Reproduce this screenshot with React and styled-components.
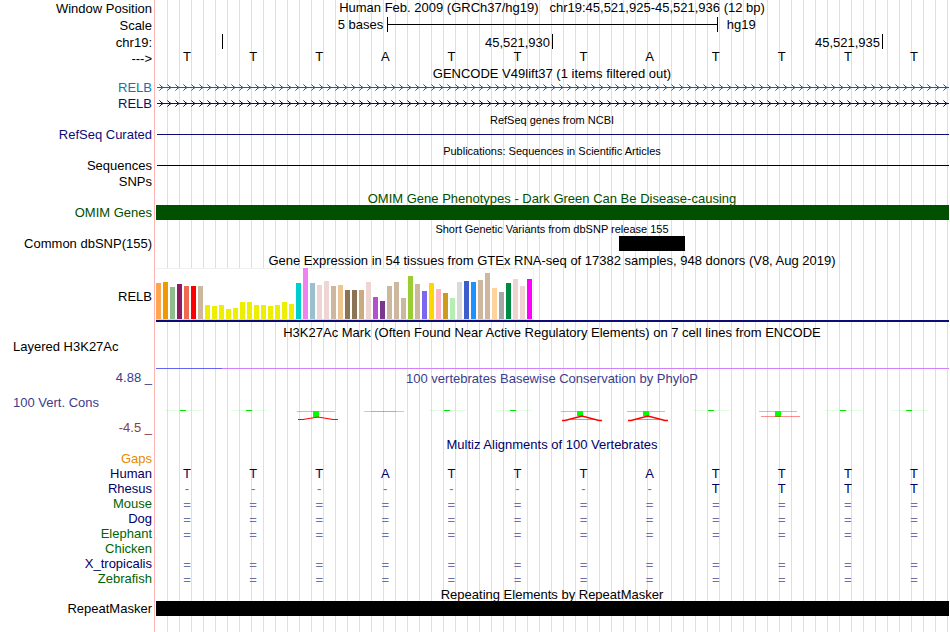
import React from 'react'
import styled, { createGlobalStyle } from 'styled-components'

const GlobalStyle = createGlobalStyle`
  body {
    margin: 0;
    background: #fff;
  }
`

const Browser = styled.main`
  min-height: 100vh;
  box-sizing: border-box;
  padding-right: 1px;
  font-family: 'Liberation Sans', Arial, sans-serif;
  font-size: 13px;
  line-height: 15px;
  color: #000;
  background-color: #fff;
  background-image:
    linear-gradient(to right, transparent 154px, #ffb4b4 154px, #ffb4b4 155px, transparent 155px),
    repeating-linear-gradient(to right, transparent 0, transparent 11px, #dcdcfa 11px, #dcdcfa 12px);
  background-position: 0 0, 156px 0;
  background-repeat: no-repeat;
`

const Row = styled.div`
  display: grid;
  grid-template-columns: 152px minmax(0, 1fr);
  column-gap: 4px;
  height: ${p => p.$height || 15}px;
  line-height: ${p => p.$line || 15}px;
`

const Label = styled.div`
  display: flex;
  flex-direction: column;
  gap: 10px;
  text-align: right;
  white-space: pre;
  color: ${p => p.$color || '#000'};
  padding-top: ${p => p.$top || 0}px;
`

const WideLabel = styled.div`
  text-align: left;
  padding-left: 13px;
`

const LowerLimit = styled.div`
  color: #8c3c3c;
`

const Title = styled.div`
  box-sizing: border-box;
  height: 15px;
  padding: 1px 1px 0 0;
  text-align: center;
  white-space: pre;
  color: ${p => p.$color || '#000'};
  font-size: ${p => (p.$small ? 11 : 13)}px;
  line-height: ${p => (p.$small ? 14 : 15)}px;
`

const Position = styled.div`
  padding-right: 1px;
  text-align: center;
  white-space: pre;
  line-height: 15px;
`

const Scale = styled.div`
  display: grid;
  grid-template-columns: 7fr 10fr 7fr;
`

const ScaleText = styled.div`
  padding: 0 4px 0 9px;
  text-align: ${p => p.$align};
  line-height: 16px;
`

const ScaleBar = styled.div`
  height: 15px;
  border: solid #000;
  border-width: 0 1px;
  background: linear-gradient(#000, #000) 0 7px / 100% 1px no-repeat;
`

const Ruler = styled.div`
  display: grid;
  grid-template-columns: 1fr 5fr 5fr 1fr;
  margin-right: 1px;
`

const Tick = styled.div`
  height: 15px;
  padding-right: 2px;
  text-align: right;
  border-left: ${p => (p.$first ? 'none' : '1px solid #000')};
`

const Bases = styled.div`
  display: grid;
  grid-template-columns: repeat(12, minmax(0, 1fr));
  margin: 0 2px 0 -2px;
  text-align: center;
  line-height: ${p => p.$line || 15}px;
  color: ${p => p.$color || '#000'};
`

const Base = styled.span`
  line-height: ${p => (p.$mark === '=' ? '17px' : 'inherit')};
  color: ${p => (p.$mark === '=' || p.$mark === '-' ? '#6e6eaa' : 'inherit')};
`

const Strand = styled.svg`
  display: block;
  width: 100%;
  height: 15px;
`

const Line = styled.div`
  height: 1px;
  margin: 7px 0 0 1px;
  background: ${p => p.$color};
`

const Block = styled.div`
  height: 15px;
  background: ${p => p.$color};
`

const Variant = styled.div`
  display: grid;
  grid-template-columns: 7fr 1fr 4fr;
`

const VariantBlock = styled(Block)`
  grid-column: 2;
`

const Expression = styled.div`
  padding-top: 1px;
`

const Bars = styled.div`
  box-sizing: border-box;
  display: flex;
  align-items: flex-end;
  gap: 2px;
  width: 378px;
  height: 52px;
  border: solid #f0f0f0;
  border-width: 1px 1px 1px 0;
  border-bottom-color: #d8d8d8;
  background: #fff;
`

const Bar = styled.div`
  flex: none;
  width: 5px;
`

const GeneLine = styled.div`
  height: 2px;
  background: #0c0c78;
`

const Histone = styled.div`
  display: grid;
  grid-template-columns: 1fr 11fr;
  padding-top: 29px;
`

const Signal = styled.div`
  height: 1px;
  background: ${p => p.$color};
`

const Scores = styled(Bases)`
  justify-items: center;
  margin: 0 4px 0 -3px;
  padding-top: 25px;
`

const tissues = [
  [36, '#ffa54f'], [37, '#ee9a00'], [32, '#8fbc8f'], [35, '#8b1c62'], [33, '#ee6a50'],
  [33, '#ff0000'], [33, '#cdb79e'], [14, '#eeee00'], [13, '#eeee00'], [14, '#eeee00'],
  [10, '#eeee00'], [11, '#eeee00'], [17, '#eeee00'], [17, '#eeee00'], [14, '#eeee00'],
  [14, '#eeee00'], [13, '#eeee00'], [14, '#eeee00'], [17, '#eeee00'], [15, '#eeee00'],
  [36, '#00cdcd'], [51, '#ee82ee'], [36, '#9ac0cd'], [34, '#eed5d2'], [38, '#eed5d2'],
  [33, '#cdb79e'], [34, '#eec591'], [29, '#8b7355'], [29, '#8b7355'], [29, '#cdaa7d'],
  [37, '#eed5d2'], [22, '#b452cd'], [18, '#7a378b'], [33, '#cdb79e'], [37, '#cdb79e'],
  [21, '#cdb79e'], [43, '#9acd32'], [35, '#cdb79e'], [28, '#7a67ee'], [36, '#ffd700'],
  [30, '#ffb6c1'], [26, '#cd9b1d'], [21, '#b4eeb4'], [37, '#d9d9d9'], [38, '#3a5fcd'],
  [37, '#1e90ff'], [39, '#cdb79e'], [46, '#cdb79e'], [31, '#ffd39b'], [27, '#a6a6a6'],
  [36, '#008b45'], [40, '#eed5d2'], [33, '#eed5d2'], [40, '#ff00ff']
]

const navy = '#000064'
const green = '#006400'

const alignments = [
  ['Gaps', '#e68a00', ''],
  ['Human', navy, 'TTTATTTATTTT'],
  ['Rhesus', navy, '--------TTTT'],
  ['Mouse', green, '============'],
  ['Dog', navy, '============'],
  ['Elephant', green, '============'],
  ['Chicken', green, ''],
  ['X_tropicalis', navy, '============'],
  ['Zebrafish', green, '============']
]

const scores = ['up', 'up', 'low', 'flat', 'up', 'up', 'down', 'down', 'up', 'mixed', 'up', 'up']

const Sequence = ({ bases, color, line }) => (
  <Bases $color={color} $line={line}>
    {bases.split('').map((base, i) => <Base key={i} $mark={base}>{base}</Base>)}
  </Bases>
)

const Intron = ({ id, color }) => (
  <Strand shapeRendering='crispEdges' aria-hidden='true'>
    <defs>
      <pattern id={id} width='8' height='15' patternUnits='userSpaceOnUse'>
        <g fill={color}>
          <rect x='5' y='6' width='1' height='3' />
          <rect x='6' y='6' width='1' height='3' opacity='0.4' />
          <rect x='4' y='5' width='1' height='1' />
          <rect x='4' y='9' width='1' height='1' />
          <rect x='3' y='4' width='1' height='1' opacity='0.6' />
          <rect x='3' y='10' width='1' height='1' opacity='0.6' />
        </g>
      </pattern>
    </defs>
    <rect width='100%' height='15' fill={`url(#${id})`} />
    <rect x='1' y='7' width='100%' height='1' fill={color} />
  </Strand>
)

const Score = ({ kind }) => (
  <svg width='48' height='12' aria-hidden='true'>
    {kind === 'up' && <rect x='3' y='0' width='37' height='1' fill='#00ff00' opacity='0.12' />}
    {kind === 'up' && <rect x='18' y='0' width='6' height='1' fill='#00e600' />}
    {kind === 'flat' && <rect x='4' y='1' width='40' height='1' fill='#ff0000' opacity='0.3' />}
    {kind === 'flat' && <rect x='12' y='1' width='24' height='1' fill='#ff0000' opacity='0.2' />}
    {['low', 'down', 'mixed'].includes(kind) && (
      <g>
        <rect x='3' y='1' width='38' height='1' fill='#00ff00' opacity='0.6' />
        <rect x='19' y='1' width='6' height={kind === 'down' ? 5 : 6} fill='#00ff00' />
      </g>
    )}
    {kind === 'mixed' && <rect x='5' y='6' width='39' height='1' fill='#ff0000' opacity='0.45' />}
    {kind === 'low' && <path d='M4 9.5H9L24 7L39 9.5H44' fill='none' stroke='#ff0000' strokeWidth='1.2' />}
    {kind === 'down' && (
      <g fill='none' stroke='#ff0000'>
        <path d='M4 10.5H7L24 6L41 10.5H44' strokeWidth='1.6' />
        <path d='M13 9.5H36' opacity='0.5' />
      </g>
    )}
  </svg>
)

const TitleRow = ({ children, ...rest }) => (
  <Row>
    <span />
    <Title {...rest}>{children}</Title>
  </Row>
)

const App = () => {
  return (
    <Browser>
      <GlobalStyle />
      <Row $height={17} $line={17}>
        <Label>Window Position</Label>
        <Position>Human Feb. 2009 (GRCh37/hg19)   chr19:45,521,925-45,521,936 (12 bp)</Position>
      </Row>
      <Row $height={17} $line={17}>
        <Label>Scale</Label>
        <Scale>
          <ScaleText $align='right'>5 bases</ScaleText>
          <ScaleBar />
          <ScaleText $align='left'>hg19</ScaleText>
        </Scale>
      </Row>
      <Row $height={17} $line={17}>
        <Label>chr19:</Label>
        <Ruler>
          <Tick $first />
          <Tick>45,521,930</Tick>
          <Tick>45,521,935</Tick>
          <Tick />
        </Ruler>
      </Row>
      <Row $height={14}>
        <Label>---&gt;</Label>
        <Sequence bases='TTTATTTATTTT' line={11} />
      </Row>

      <TitleRow>GENCODE V49lift37 (1 items filtered out)</TitleRow>
      <Row $height={16}>
        <Label $color='#0c78b4'>RELB</Label>
        <Intron id='intron-a' color='#0c64a0' />
      </Row>
      <Row $height={16}>
        <Label $color='#0c0c78'>RELB</Label>
        <Intron id='intron-b' color='#0c0c78' />
      </Row>

      <TitleRow $small>RefSeq genes from NCBI</TitleRow>
      <Row $height={16}>
        <Label $color='#0c0c78'>RefSeq Curated</Label>
        <Line $color='#0c0c78' />
      </Row>

      <TitleRow $small>Publications: Sequences in Scientific Articles</TitleRow>
      <Row $height={16}>
        <Label>Sequences</Label>
        <Line $color='#000' />
      </Row>
      <Row $height={16}>
        <Label>SNPs</Label>
      </Row>

      <TitleRow $color='#005000'>OMIM Gene Phenotypes - Dark Green Can Be Disease-causing</TitleRow>
      <Row $height={16}>
        <Label $color='#005000'>OMIM Genes</Label>
        <Block $color='#005000' />
      </Row>

      <TitleRow $small>Short Genetic Variants from dbSNP release 155</TitleRow>
      <Row $height={16}>
        <Label>Common dbSNP(155)</Label>
        <Variant>
          <VariantBlock $color='#000' />
        </Variant>
      </Row>

      <TitleRow>Gene Expression in 54 tissues from GTEx RNA-seq of 17382 samples, 948 donors (V8, Aug 2019)</TitleRow>
      <Row $height={57}>
        <Label $top={22}>RELB</Label>
        <Expression>
          <Bars>
            {tissues.map(([height, color], i) => (
              <Bar key={i} style={{ height, background: color }} />
            ))}
          </Bars>
          <GeneLine />
        </Expression>
      </Row>

      <TitleRow>H3K27Ac Mark (Often Found Near Active Regulatory Elements) on 7 cell lines from ENCODE</TitleRow>
      <Row $height={31}>
        <WideLabel>Layered H3K27Ac</WideLabel>
        <Histone>
          <Signal $color='#6464f0' />
          <Signal $color='#d082fa' />
        </Histone>
      </Row>

      <Row>
        <Label $color='#3c3c8c'>4.88 _</Label>
        <Title $color='#3c3c8c'>100 vertebrates Basewise Conservation by PhyloP</Title>
      </Row>
      <Row $height={51}>
        <Label $color='#3c3c8c' $top={10}>
          <WideLabel>100 Vert. Cons</WideLabel>
          <LowerLimit>-4.5 _</LowerLimit>
        </Label>
        <Scores>
          {scores.map((kind, i) => <Score key={i} kind={kind} />)}
        </Scores>
      </Row>

      <TitleRow $color={navy}>Multiz Alignments of 100 Vertebrates</TitleRow>
      {alignments.map(([name, color, bases]) => (
        <Row key={name}>
          <Label $color={color}>{name}</Label>
          <Sequence bases={bases} color={navy} />
        </Row>
      ))}

      <TitleRow>Repeating Elements by RepeatMasker</TitleRow>
      <Row>
        <Label>RepeatMasker</Label>
        <Block $color='#000' />
      </Row>
    </Browser>
  )
}

export default App
